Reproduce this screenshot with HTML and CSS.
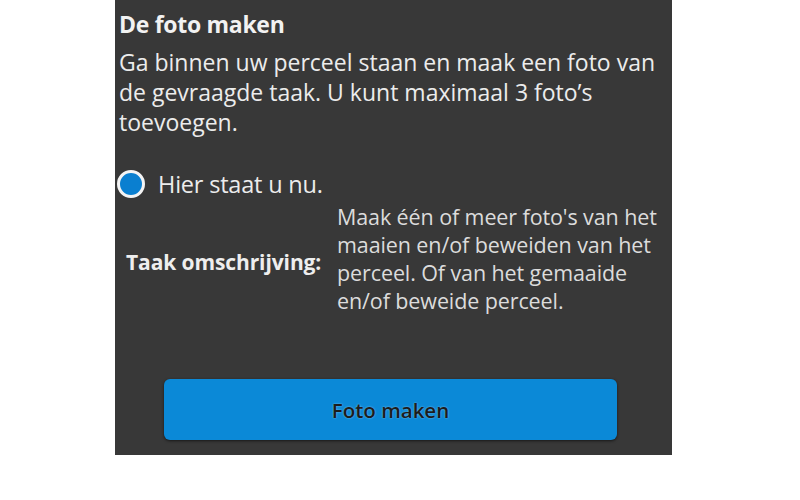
FILE: index.html
```html
<!DOCTYPE html>
<html lang="nl">
<head>
<meta charset="utf-8">
<link rel="stylesheet" href="styles.css">
</head>
<body>
<div class="panel">
  <h1 class="title">De foto maken</h1>
  <p class="intro">Ga binnen uw perceel staan en maak een foto van de gevraagde taak. U kunt maximaal 3 foto’s toevoegen.</p>
  <div class="location">
    <span class="dot"></span>
    <span class="loc-text">Hier staat u nu.</span>
  </div>
  <div class="task">
    <div class="task-label">Taak omschrijving:</div>
    <div class="task-desc">Maak één of meer foto's van het maaien en/of beweiden van het perceel. Of van het gemaaide en/of beweide perceel.</div>
  </div>
  <div class="actions">
    <button class="btn">Foto maken</button>
  </div>
</div>
</body>
</html>
```
FILE: styles.css
```css
html, body {
  margin: 0;
  padding: 0;
  background: #ffffff;
}
body {
  font-family: "Open Sans", "Noto Sans", sans-serif;
}
.panel {
  margin-left: 115px;
  width: 557px;
  height: 455px;
  box-sizing: border-box;
  background: #383838;
  padding: 10px 0 0 4px;
  display: flex;
  flex-direction: column;
}
.title {
  margin: 0;
  font-size: 23px;
  font-weight: 700;
  color: #f2f2f2;
  line-height: 28px;
  letter-spacing: -0.3px;
}
.intro {
  margin: 9px 0 0;
  font-size: 23px;
  line-height: 30px;
  color: #ececec;
  width: 550px;
  letter-spacing: 0;
}
.location {
  display: flex;
  align-items: center;
  gap: 13px;
  margin-top: 34px;
  margin-left: -2px;
  height: 26px;
}
.dot {
  width: 22px;
  height: 22px;
  border-radius: 50%;
  background: #0a7fd0;
  border: 3px solid #f4f4f4;
  flex: none;
}
.loc-text {
  font-size: 23.5px;
  line-height: 26px;
  color: #ececec;
  letter-spacing: -0.2px;
}
.task {
  display: flex;
  align-items: center;
  margin-top: 6px;
}
.task-label {
  margin-left: 7px;
  width: 211px;
  flex: none;
  padding-top: 6px;
  font-size: 21px;
  line-height: 28px;
  font-weight: 700;
  color: #eeeeee;
  letter-spacing: -0.1px;
}
.task-desc {
  width: 330px;
  font-size: 21.5px;
  line-height: 28px;
  color: #dcdcdc;
  letter-spacing: -0.1px;
}
.actions {
  margin-top: 64px;
  padding-left: 45px;
}
.btn {
  display: block;
  width: 453px;
  height: 61px;
  border: none;
  border-radius: 6px;
  background: #0b89d7;
  box-shadow: 0 1px 3px rgba(0,0,0,0.6);
  font-family: "Open Sans", "Noto Sans", sans-serif;
  font-size: 20.5px;
  font-weight: 600;
  color: #1c1c1c;
  text-shadow: 0 0 2px rgba(255,255,255,0.5);
}
```
